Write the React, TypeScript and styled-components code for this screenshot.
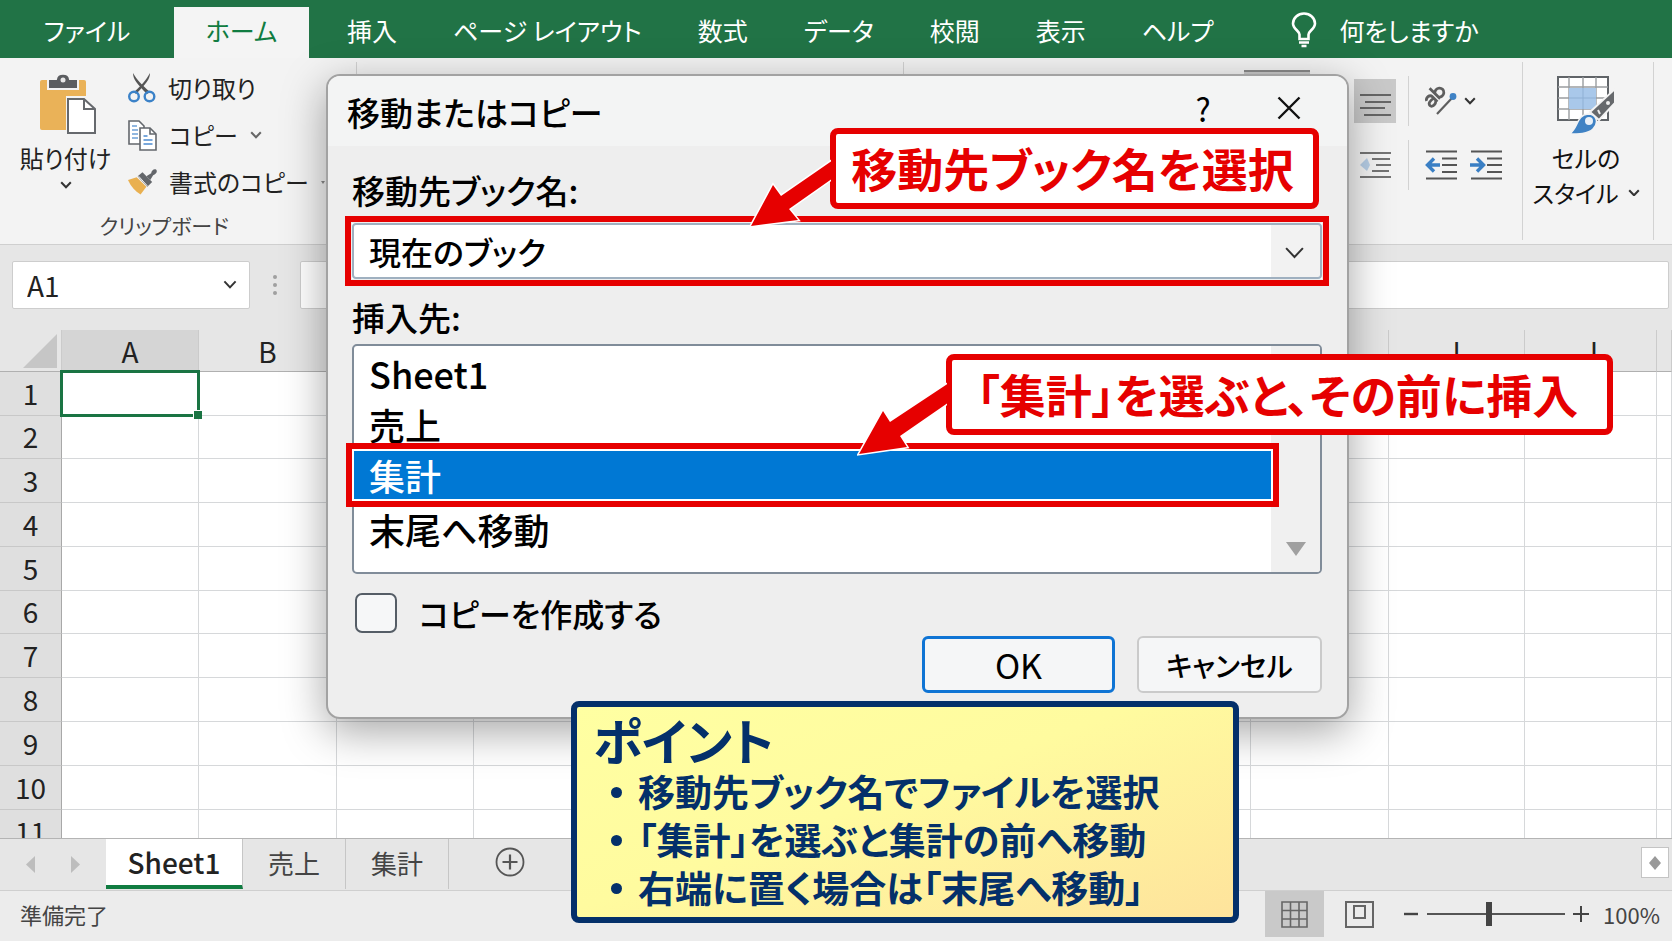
import React, { useState } from "react";
import styled, { createGlobalStyle } from "styled-components";

const GlobalStyle = createGlobalStyle`
  *, *::before, *::after { box-sizing: border-box; }
  body {
    margin: 0;
    background: #e6e6e6;
    font-family: "Noto Sans CJK JP", "Noto Sans", sans-serif;
    font-feature-settings: "palt";
    color: #222;
  }
  button, input, select { font: inherit; color: inherit; font-feature-settings: inherit; }
`;

const PlainButton = styled.button`
  display: inline-flex;
  align-items: center;
  justify-content: center;
  padding: 0;
  border: 0;
  background: none;
  white-space: nowrap;
  cursor: pointer;
`;

const Window = styled.div`
  position: relative;
  display: flex;
  flex-direction: column;
  height: 100vh;
  min-height: 720px;
  overflow: hidden;
`;

/* ---------- ribbon tabs ---------- */

const TabBar = styled.nav`
  display: flex;
  align-items: flex-end;
  height: 58px;
  flex: none;
  background: #217346;
`;

const RibbonTab = styled(PlainButton)<{ $active?: boolean; $first?: boolean }>`
  height: 51px;
  min-width: ${(p) => (p.$first ? "174px" : p.$active ? "135px" : "0")};
  margin-right: ${(p) => (p.$active ? "10px" : "0")};
  padding: 0 28px 6px;
  font-size: 25px;
  line-height: 32px;
  color: ${(p) => (p.$active ? "#107c41" : "#fff")};
  background: ${(p) => (p.$active ? "#f4f4f4" : "transparent")};
`;

const TellMe = styled(PlainButton)`
  height: 51px;
  gap: 22px;
  margin-left: 50px;
  padding-bottom: 6px;
  font-size: 25px;
  color: #fff;
`;

/* ---------- ribbon ---------- */

const Ribbon = styled.section`
  display: flex;
  flex: none;
  height: 187px;
  padding: 4px 0;
  background: #f3f3f3;
  border-bottom: 1px solid #cfcfcf;
`;

const Group = styled.div<{ $width?: number }>`
  display: flex;
  flex-direction: column;
  ${(p) => (p.$width ? `flex: 0 0 ${p.$width}px;` : "flex: 1 1 0;")}
  border-right: 1px solid #d2d2d2;
  &:last-child { border-right: 0; }
`;

const ClipboardTools = styled.div`
  display: flex;
  gap: 18px;
  padding: 8px 0 0 21px;
`;

const PasteButton = styled(PlainButton)`
  flex-direction: column;
  justify-content: flex-start;
  width: 89px;
  padding-top: 4px;
  gap: 5px;
  font-size: 24px;
  line-height: 36px;
`;

const ToolList = styled.div`
  display: flex;
  flex-direction: column;
  gap: 11px;
`;

const ToolButton = styled(PlainButton)`
  justify-content: flex-start;
  height: 36px;
  gap: 12px;
  font-size: 24px;
  line-height: 36px;
`;

const GroupLabel = styled.div`
  margin-top: auto;
  padding-right: 28px;
  font-size: 21px;
  line-height: 30px;
  text-align: center;
  color: #444;
`;

const AlignTools = styled.div`
  display: flex;
  flex-direction: column;
  align-items: flex-end;
  gap: 8px;
  padding: 8px 20px 0 0;
`;

const AlignRow = styled.div<{ $tall?: boolean }>`
  display: flex;
  align-items: center;
  height: ${(p) => (p.$tall ? "62px" : "50px")};
`;

const WrapButton = styled(PlainButton)`
  align-self: stretch;
  width: 66px;
  margin-right: 44px;
  background: #c9c9c9;
  border-top: 2px solid #8a8a8a;
`;

const AlignButton = styled(PlainButton)<{ $active?: boolean }>`
  width: 42px;
  height: 44px;
  margin-right: 12px;
  background: ${(p) => (p.$active ? "#c9c9c9" : "transparent")};
`;

const AlignPair = styled.div<{ $gap: number }>`
  display: flex;
  align-items: center;
  gap: ${(p) => p.$gap}px;
  width: 94px;
  height: 50px;
  padding-left: 16px;
  border-left: 1px solid #d2d2d2;
`;

const StyleButton = styled(PlainButton)`
  flex-direction: column;
  justify-content: flex-start;
  padding: 14px 4px 0 0;
  font-size: 24px;
  line-height: 35px;
  color: #111;
`;

const StyleLabel = styled.span`
  margin-top: 6px;
`;

const InlineRow = styled.span`
  display: inline-flex;
  align-items: center;
  gap: 9px;
`;

/* ---------- formula bar ---------- */

const FormulaBar = styled.div`
  display: flex;
  align-items: center;
  flex: none;
  height: 85px;
  padding: 0 3px 6px 12px;
  background: #e6e6e6;
`;

const NameBox = styled.div`
  display: flex;
  align-items: center;
  width: 238px;
  height: 48px;
  padding: 0 12px 0 14px;
  background: #fff;
  border: 1px solid #cdcdcd;
  border-radius: 2px;
`;

const NameInput = styled.input`
  flex: 1;
  min-width: 0;
  padding: 0;
  border: 0;
  outline: 0;
  background: none;
  font-size: 28px;
`;

const Grip = styled.div`
  display: flex;
  flex-direction: column;
  align-items: center;
  gap: 4px;
  width: 50px;
`;

const GripDot = styled.span`
  width: 4px;
  height: 4px;
  border-radius: 50%;
  background: #a0a0a0;
`;

const FormulaInput = styled.input`
  flex: 1;
  height: 48px;
  padding: 0 20px;
  border: 1px solid #cdcdcd;
  border-radius: 2px;
  outline: 0;
  background: #fff;
`;

/* ---------- grid ---------- */

const SheetArea = styled.div`
  flex: 1 1 0;
  overflow: hidden;
  background: #fff;
`;

const Grid = styled.table`
  width: 100%;
  table-layout: fixed;
  border-collapse: separate;
  border-spacing: 0;
  font-size: 28px;
  line-height: 40px;
  font-weight: 400;
`;

const ColHead = styled.th<{ $selected?: boolean }>`
  height: 42px;
  padding: 0;
  font-weight: 400;
  overflow: hidden;
  background: ${(p) => (p.$selected ? "#d5d5d5" : "#e6e6e6")};
  border-right: 1px solid #cbcbcb;
  border-bottom: 1px solid #b0b0b0;
`;

const Corner = styled.th`
  height: 42px;
  padding: 0 4px 0 0;
  text-align: right;
  line-height: 0;
  background: #e6e6e6;
  border-right: 1px solid #cbcbcb;
  border-bottom: 1px solid #b0b0b0;
`;

const RowHead = styled.th<{ $height: number }>`
  height: ${(p) => p.$height}px;
  padding: 0 0 2px;
  font-weight: 400;
  background: #dfdfdf;
  border-right: 1px solid #a8a8a8;
  border-bottom: 1px solid #c8c8c8;
`;

const Cell = styled.td`
  position: relative;
  padding: 0;
  border-right: 1px solid #d6d8da;
  border-bottom: 1px solid #d6d8da;
`;

const Selection = styled.div`
  position: absolute;
  z-index: 1;
  inset: -2px;
  border: 3px solid #1a7443;
  &::after {
    content: "";
    position: absolute;
    right: -5px;
    bottom: -5px;
    width: 9px;
    height: 9px;
    background: #1a7443;
    border: 1px solid #fff;
    border-width: 1px 0 0 1px;
  }
`;

/* ---------- sheet tabs and status bar ---------- */

const SheetBar = styled.div`
  display: flex;
  align-items: flex-start;
  flex: none;
  height: 53px;
  background: #e6e6e6;
  border-top: 1px solid #b4b4b4;
  border-bottom: 1px solid #cfcfcf;
`;

const SheetNav = styled.div`
  display: flex;
  align-items: center;
  gap: 36px;
  width: 106px;
  height: 50px;
  padding-left: 26px;
`;

const SheetTab = styled(PlainButton)<{ $active?: boolean }>`
  height: 50px;
  padding: ${(p) => (p.$active ? "0" : "0 25px 3px")};
  width: ${(p) => (p.$active ? "137px" : "auto")};
  font-size: ${(p) => (p.$active ? "28px" : "26px")};
  line-height: 40px;
  font-weight: ${(p) => (p.$active ? 500 : 400)};
  color: ${(p) => (p.$active ? "#222" : "#444")};
  background: ${(p) => (p.$active ? "#fff" : "transparent")};
  border-right: 1px solid #c6c6c6;
  border-bottom: ${(p) => (p.$active ? "4px solid #107c41" : "0")};
`;

const AddSheet = styled(PlainButton)`
  height: 46px;
  margin-left: 46px;
`;

const ScrollEnd = styled(PlainButton)`
  width: 28px;
  height: 31px;
  margin: 8px 3px 0 auto;
  background: #fff;
  border: 1px solid #c4c4c4;
`;

const StatusBar = styled.footer`
  display: flex;
  align-items: center;
  flex: none;
  height: 50px;
  padding: 0 12px 4px 20px;
  background: #ececec;
  font-size: 22px;
  line-height: 32px;
  color: #444;
`;

const StatusTools = styled.div`
  display: flex;
  align-items: center;
  margin-left: auto;
`;

const ViewButton = styled(PlainButton)<{ $active?: boolean }>`
  width: 59px;
  height: 46px;
  margin-right: 6px;
  background: ${(p) => (p.$active ? "#c9c9c9" : "transparent")};
`;

const Zoom = styled.div`
  display: flex;
  align-items: center;
  gap: 8px;
  margin: 0 14px 0 8px;
`;

const ZoomSlider = styled.input`
  appearance: none;
  width: 138px;
  height: 24px;
  margin: 0;
  background: linear-gradient(#555, #555) center / 100% 2px no-repeat;
  &::-webkit-slider-thumb {
    appearance: none;
    width: 6px;
    height: 24px;
    background: #444;
  }
`;

const ZoomValue = styled.output`
  font-size: 22px;
`;

/* ---------- dialog ---------- */

const Dialog = styled.section`
  position: absolute;
  top: 74px;
  left: 326px;
  right: 323px;
  padding-bottom: 24px;
  background: #eeeeee;
  border: 2px solid #a2a2a2;
  border-radius: 14px;
  box-shadow: 0 12px 44px rgba(0, 0, 0, 0.36);
  color: #000;
`;

const DialogHeader = styled.header`
  display: flex;
  align-items: center;
  height: 70px;
  padding: 1px 44px 0 19px;
  background: #f3f4f4;
  border-radius: 12px 12px 0 0;
`;

const DialogTitle = styled.h2`
  margin: 0 auto 0 0;
  font-size: 33px;
  line-height: 44px;
  font-weight: 500;
`;

const HeaderButton = styled(PlainButton)`
  width: 48px;
  height: 48px;
  margin-left: 38px;
  margin-bottom: 8px;
  font-size: 32px;
  &:last-child { margin-right: -10px; }
`;

const DialogBody = styled.div`
  display: flex;
  flex-direction: column;
  padding: 22px 25px 0 24px;
`;

const FieldLabel = styled.label<{ $gap: number }>`
  font-size: 33px;
  line-height: 44px;
  font-weight: 500;
  margin-bottom: ${(p) => p.$gap}px;
`;

const Field = styled.div`
  position: relative;
  margin-bottom: 16px;
  background: #fff;
  outline: 6px solid #e60000;
  outline-offset: 1px;
`;

const ComboBox = styled.select`
  appearance: none;
  display: block;
  width: 100%;
  height: 56px;
  padding: 0 64px 0 15px;
  border: 2px solid #9fb0c0;
  border-radius: 4px;
  background: linear-gradient(to left, #f2f2f2 49px, #fff 49px);
  font-size: 32px;
  font-weight: 500;
  color: #000;
`;

const ComboArrow = styled.span`
  position: absolute;
  right: 17px;
  top: 23px;
  line-height: 0;
  pointer-events: none;
`;

const ListFrame = styled.div`
  position: relative;
  display: flex;
  height: 230px;
  border: 2px solid #808c99;
  border-radius: 5px;
  background: #fff;
`;

const ListBox = styled.ul`
  flex: 1;
  margin: 0;
  padding: 3px 0 0;
  list-style: none;
`;

const ListItem = styled.li<{ $selected?: boolean }>`
  position: relative;
  height: 48px;
  margin-bottom: ${(p) => (p.$selected ? 6 : 3)}px;
  padding-left: 15px;
  font-size: 36px;
  line-height: 48px;
  font-weight: 500;
  color: ${(p) => (p.$selected ? "#fff" : "#000")};
  background: ${(p) => (p.$selected ? "#0078d4" : "transparent")};
  outline: ${(p) => (p.$selected ? "6px solid #e60000" : "none")};
  outline-offset: 2px;
  box-shadow: ${(p) => (p.$selected ? "0 0 0 2px #fff" : "none")};
  z-index: ${(p) => (p.$selected ? 1 : 0)};
`;

const ListScroll = styled.div`
  display: flex;
  align-items: flex-end;
  justify-content: center;
  width: 49px;
  padding-bottom: 16px;
  background: #f0f0f0;
  border-radius: 0 3px 3px 0;
  line-height: 0;
`;

const CopyOption = styled.label`
  display: flex;
  align-items: center;
  gap: 22px;
  margin: 16px 0 0 3px;
  font-size: 32px;
  line-height: 46px;
  font-weight: 500;
`;

const CheckBox = styled.input`
  appearance: none;
  width: 42px;
  height: 40px;
  margin: 0;
  border: 2px solid #555d66;
  border-radius: 7px;
  background: #f6f7f8;
  &:checked { background: #0078d4; }
`;

const DialogActions = styled.div`
  display: flex;
  justify-content: flex-end;
  gap: 22px;
`;

const DialogButton = styled(PlainButton)<{ $primary?: boolean }>`
  width: ${(p) => (p.$primary ? "193px" : "185px")};
  height: 57px;
  border: ${(p) => (p.$primary ? "3px solid #0f74d4" : "2px solid #cacaca")};
  border-radius: 6px;
  background: #f5f6f7;
  font-size: ${(p) => (p.$primary ? "34px" : "28px")};
  line-height: 44px;
  font-weight: ${(p) => (p.$primary ? 400 : 500)};
`;

/* ---------- annotations ---------- */

const Callout = styled.div<{ $top: number; $right: number; $width: number }>`
  position: absolute;
  z-index: 2;
  top: ${(p) => p.$top}px;
  right: ${(p) => p.$right}px;
  display: flex;
  align-items: center;
  justify-content: center;
  width: ${(p) => p.$width}px;
  height: 81px;
  padding: 0 4px 4px 0;
  border: 6px solid #e60000;
  border-radius: 8px;
  background: #fff;
  font-size: 46px;
  line-height: 60px;
  font-weight: 700;
  white-space: nowrap;
  color: #e60000;
`;

const CalloutArrow = styled.svg`
  position: absolute;
  right: calc(100% + 5px);
  top: 19px;
`;

const PointNote = styled.aside`
  position: absolute;
  top: 701px;
  left: 571px;
  right: 433px;
  padding: 4px 16px 6px;
  border: 6px solid #04306a;
  border-radius: 8px;
  background: linear-gradient(160deg, #ffffa2 0%, #fffb9f 45%, #fee39c 100%);
  color: #04306a;
  font-weight: 700;
`;

const PointTitle = styled.h3`
  margin: 0;
  font-size: 50px;
  line-height: 56px;
`;

const PointList = styled.ul`
  margin: 0;
  padding: 0 0 0 45px;
  list-style: none;
  font-size: 37px;
  line-height: 48px;
  white-space: nowrap;
`;

const PointItem = styled.li`
  position: relative;
  &::before {
    content: "";
    position: absolute;
    left: -27px;
    top: 20px;
    width: 11px;
    height: 11px;
    border-radius: 50%;
    background: #04306a;
  }
`;

/* ---------- drawings ---------- */

const Chevron = ({ w = 12, color = "#333", stroke = 2 }: { w?: number; color?: string; stroke?: number }) => (
  <svg width={w} height={w * 0.65} viewBox="0 0 20 13" fill="none" aria-hidden="true">
    <path d="M2 2l8 8.500 8-8.500" stroke={color} strokeWidth={(stroke * 20) / w} />
  </svg>
);

const BulbIcon = () => (
  <svg width="26" height="36" viewBox="0 0 26 36" fill="none" stroke="#fff" strokeWidth="2.600" aria-hidden="true">
    <path d="M8.500 27v-4.500C8.500 19 2 17 2 11.500a11 10 0 0 1 22 0C24 17 17.500 19 17.500 22.500V27z" />
    <path d="M8 30.500h10M10.500 34h5" />
  </svg>
);

const PasteIcon = () => (
  <svg width="62" height="61" viewBox="-5 0 62 61" aria-hidden="true">
    <rect x="0" y="6" width="46" height="50" rx="2" fill="#eab258" />
    <path d="M8 5h8c1-7 13-7 14 0h8v10H8z" fill="#5b5d60" stroke="#f3f3f3" strokeWidth="2" />
    <circle cx="23" cy="6" r="2.500" fill="#e8e8e8" />
    <path d="M26 22h20l11 11v28H26z" fill="#f3f3f3" />
    <path d="M28 25h16l11 10v24H28z" fill="#fff" stroke="#66696d" strokeWidth="2" />
    <path d="M44 25v10h11" fill="none" stroke="#66696d" strokeWidth="2" />
  </svg>
);

const CutIcon = () => (
  <svg width="28" height="30" viewBox="0 0 28 30" fill="none" aria-hidden="true">
    <path d="M5 0C5 6 9 11 19 21l3-2C14 12 9 7 5 0z" fill="#555" />
    <path d="M22 0c0 6-4 11-14 21l-2-2C14 12 18 7 22 0z" fill="#555" />
    <circle cx="6" cy="23.500" r="4.800" stroke="#3b82c8" strokeWidth="2.400" />
    <circle cx="21.500" cy="23.500" r="4.800" stroke="#3b82c8" strokeWidth="2.400" />
  </svg>
);

const CopyIcon = () => (
  <svg width="29" height="31" viewBox="0 0 29 31" fill="#fff" stroke="#63676c" strokeWidth="1.600" aria-hidden="true">
    <path d="M1 1h10l5 5v18H1z" />
    <path d="M4 6h5M4 10h6M4 14h6M4 18h6" stroke="#6ea0d6" />
    <path d="M12 8h10l6 6v16H12z" />
    <path d="M22 8v6h6" fill="none" />
    <path d="M15.500 16h4M15.500 20h9M15.500 24h9" stroke="#4c8bd0" />
  </svg>
);

const BrushIcon = () => (
  <svg width="29" height="28" viewBox="0 0 30 28" aria-hidden="true">
    <path d="M0 12l9-3 10 10-6 8C8 24 3 19 0 12z" fill="#e9b050" />
    <path d="M10 8l5-4 10 10-5 5z" fill="#63666a" />
    <path d="M19 8l5-3c0-3 3-5 5-4 2 2 0 5-3 6l-3 5z" fill="#63666a" />
    <path d="M11 8l9 10" stroke="#f3f3f3" strokeWidth="1" />
  </svg>
);

const AlignIcon = () => (
  <svg width="32" height="34" viewBox="0 0 32 34" stroke="#666" strokeWidth="2" aria-hidden="true">
    <path d="M1 11h31M6 18h26M1 24h25M5 31h27" />
  </svg>
);

const IndentIcon = ({ dir, faint }: { dir: "left" | "right"; faint?: boolean }) => (
  <svg width="33" height="30" viewBox="0 0 33 30" fill="none" opacity={faint ? 0.8 : 1} aria-hidden="true">
    {faint ? (
      <>
        <path d="M1 3h31M13 9h18M17 15h15M13 21h17M1 27h31" stroke="#555" strokeWidth="1.800" />
        <path d="M1 15l7-7 3 7-3 6z" fill="#a9c6e4" />
      </>
    ) : (
      <>
        <path d="M1 1.500h31M17 8.500h15M17 15h15M17 22h15M1 28.500h31" stroke="#555" strokeWidth="2" />
        <path
          d={dir === "left" ? "M15 15H3M9 8.500L2.500 15 9 21.500" : "M0 15h12M7 8.500l6.500 6.500L7 21.500"}
          stroke="#3a7fc4"
          strokeWidth="3.400"
        />
      </>
    )}
  </svg>
);

const OrientIcon = () => (
  <svg width="32" height="30" viewBox="0 0 32 30" fill="none" stroke="#5e5e5e" strokeWidth="2.800" aria-hidden="true">
    <g transform="translate(6 22) rotate(-45)">
      <path d="M9 0v-7c0-4-6-4-7-1M9-5C4-6 1-5 1-2.500 1 1 7 1 9-2.500" />
      <path d="M13-15V0M13-2.500a4.600 4.400 0 1 0 0-5" />
    </g>
    <path d="M12 28L27 12" strokeWidth="2.200" />
    <circle cx="28" cy="10.500" r="3.400" fill="#3f82c5" stroke="none" />
  </svg>
);

const CellStyleIcon = () => (
  <svg width="58" height="58" viewBox="0 0 58 58" aria-hidden="true">
    <rect x="1" y="1" width="50" height="43" fill="#fff" stroke="#606468" strokeWidth="2" />
    <path d="M12 1v43M26 1v43M39 1v43M1 11h50M1 22h50M1 33h50" stroke="#9a9da0" strokeWidth="1.400" />
    <rect x="12" y="12" width="27" height="21" fill="#a9c8ea" />
    <path d="M26 12v21M12 22h27" stroke="#8fb0d4" />
    <path d="M58 13v14L42 44l-9-8z" fill="#66696c" stroke="#f3f3f3" strokeWidth="2" />
    <path d="M12 58c9-4 7-19 19-20 9 0 11 9 5 15-5 5-15 5-24 5z" fill="#3f82c4" stroke="#f3f3f3" strokeWidth="1.500" />
    <circle cx="32" cy="45" r="4" fill="#e8f0f8" />
    <circle cx="51" cy="27" r="2" fill="#eee" />
    <path d="M41 34l2 4" stroke="#eee" strokeWidth="2" />
  </svg>
);

const Triangle = ({ d, w, h, fill }: { d: string; w: number; h: number; fill: string }) => (
  <svg width={w} height={h} viewBox={`0 0 ${w} ${h}`} aria-hidden="true">
    <path d={d} fill={fill} />
  </svg>
);

/* ---------- data ---------- */

const ribbonTabs = ["ファイル", "ホーム", "挿入", "ページ レイアウト", "数式", "データ", "校閲", "表示", "ヘルプ"];
const columns = [
  { name: "A", width: 137 },
  { name: "B", width: 138 },
  { name: "", width: 137 },
  { name: "", width: 194 },
  { name: "", width: 194 },
  { name: "", width: 194 },
  { name: "", width: 195 },
  { name: "", width: 138 },
  { name: "I", width: 136 },
  { name: "J", width: 132 },
];
const rowHeights = [44, 43, 44, 44, 44, 43, 44, 44, 44, 44, 44];
const sheets = ["Sheet1", "売上", "集計"];
const targets = ["Sheet1", "売上", "集計", "末尾へ移動"];
const points = ["移動先ブック名でファイルを選択", "「集計」を選ぶと集計の前へ移動", "右端に置く場合は「末尾へ移動」"];

export default function App() {
  const [target, setTarget] = useState("集計");
  return (
    <Window>
      <GlobalStyle />
      <TabBar aria-label="リボン">
        {ribbonTabs.map((t, i) => (
          <RibbonTab key={t} $first={i === 0} $active={i === 1}>{t}</RibbonTab>
        ))}
        <TellMe><BulbIcon />何をしますか</TellMe>
      </TabBar>

      <Ribbon>
        <Group $width={357}>
          <ClipboardTools>
            <PasteButton><PasteIcon />貼り付け<Chevron /></PasteButton>
            <ToolList>
              <ToolButton><CutIcon />切り取り</ToolButton>
              <ToolButton><CopyIcon />コピー<Chevron color="#666" /></ToolButton>
              <ToolButton>
                <BrushIcon />書式のコピー
                <Triangle w={4} h={3} d="M0 0h4L2 3z" fill="#888" />
              </ToolButton>
            </ToolList>
          </ClipboardTools>
          <GroupLabel>クリップボード</GroupLabel>
        </Group>
        <Group $width={547} />
        <Group>
          <AlignTools>
            <AlignRow $tall>
              <WrapButton aria-label="折り返して全体を表示する" />
              <AlignButton $active aria-label="中央揃え"><AlignIcon /></AlignButton>
              <AlignPair $gap={7}>
                <PlainButton aria-label="方向"><OrientIcon /></PlainButton>
                <Chevron />
              </AlignPair>
            </AlignRow>
            <AlignRow>
              <AlignButton aria-label="字下げ"><IndentIcon dir="left" faint /></AlignButton>
              <AlignPair $gap={12}>
                <PlainButton aria-label="インデントを減らす"><IndentIcon dir="left" /></PlainButton>
                <PlainButton aria-label="インデントを増やす"><IndentIcon dir="right" /></PlainButton>
              </AlignPair>
            </AlignRow>
          </AlignTools>
        </Group>
        <Group $width={131}>
          <StyleButton>
            <CellStyleIcon />
            <StyleLabel>セルの</StyleLabel>
            <InlineRow>スタイル<Chevron /></InlineRow>
          </StyleButton>
        </Group>
        <Group $width={18} />
      </Ribbon>

      <FormulaBar>
        <NameBox>
          <NameInput aria-label="名前ボックス" defaultValue="A1" />
          <Chevron w={14} />
        </NameBox>
        <Grip><GripDot /><GripDot /><GripDot /></Grip>
        <FormulaInput aria-label="数式バー" />
      </FormulaBar>

      <SheetArea>
        <Grid>
          <colgroup>
            <col width={62} />
            {columns.map((c, i) => <col key={i} width={c.width} />)}
            <col />
          </colgroup>
          <thead>
            <tr>
              <Corner><Triangle w={34} h={34} d="M34 0v34H0z" fill="#c6c6c6" /></Corner>
              {columns.map((c, i) => <ColHead key={i} $selected={i === 0}>{c.name}</ColHead>)}
              <ColHead />
            </tr>
          </thead>
          <tbody>
            {rowHeights.map((h, r) => (
              <tr key={r}>
                <RowHead scope="row" $height={h}>{r + 1}</RowHead>
                {columns.map((c, i) => <Cell key={i}>{r === 0 && i === 0 && <Selection />}</Cell>)}
                <Cell />
              </tr>
            ))}
          </tbody>
        </Grid>
      </SheetArea>

      <SheetBar>
        <SheetNav>
          <Triangle w={9} h={17} d="M9 0v17L0 8.500z" fill="#bdbdbd" />
          <Triangle w={9} h={17} d="M0 0v17L9 8.500z" fill="#bdbdbd" />
        </SheetNav>
        {sheets.map((s, i) => <SheetTab key={s} $active={i === 0}>{s}</SheetTab>)}
        <AddSheet aria-label="新しいシート">
          <svg width="30" height="30" viewBox="0 0 30 30" fill="none" stroke="#555" strokeWidth="1.800" aria-hidden="true">
            <circle cx="15" cy="15" r="13.500" />
            <path d="M15 7.500v15M7.500 15h15" strokeWidth="2.200" />
          </svg>
        </AddSheet>
        <ScrollEnd aria-label="右へスクロール">
          <Triangle w={12} h={14} d="M6 0l6 7-6 7-6-7z" fill="#999" />
        </ScrollEnd>
      </SheetBar>

      <StatusBar>
        <span>準備完了</span>
        <StatusTools>
          <ViewButton $active aria-label="標準">
            <svg width="27" height="27" viewBox="0 0 27 27" fill="none" stroke="#666" strokeWidth="1.600" aria-hidden="true">
              <path d="M1 1h25v25H1zM9.500 1v25M18 1v25M1 9.500h25M1 18h25" />
            </svg>
          </ViewButton>
          <ViewButton aria-label="ページ レイアウト">
            <svg width="29" height="27" viewBox="0 0 29 27" fill="none" stroke="#666" strokeWidth="2" aria-hidden="true">
              <path d="M1 1h27v25H1zM9 5h11v12H9z" />
            </svg>
          </ViewButton>
          <Zoom>
            <PlainButton aria-label="縮小">
              <svg width="16" height="16" viewBox="0 0 16 16" stroke="#444" strokeWidth="2.400" aria-hidden="true"><path d="M1 8h14" /></svg>
            </PlainButton>
            <ZoomSlider type="range" aria-label="ズーム" min={0} max={100} defaultValue={45} />
            <PlainButton aria-label="拡大">
              <svg width="16" height="16" viewBox="0 0 16 16" stroke="#444" strokeWidth="2" aria-hidden="true"><path d="M0 8h16M8 0v16" /></svg>
            </PlainButton>
          </Zoom>
          <ZoomValue>100%</ZoomValue>
        </StatusTools>
      </StatusBar>

      <Dialog role="dialog" aria-labelledby="dialog-title">
        <DialogHeader>
          <DialogTitle id="dialog-title">移動またはコピー</DialogTitle>
          <HeaderButton aria-label="ヘルプ">?</HeaderButton>
          <HeaderButton aria-label="閉じる">
            <svg width="24" height="24" viewBox="0 0 24 24" stroke="#111" strokeWidth="2.400" aria-hidden="true">
              <path d="M1.500 1.500l21 21M22.500 1.500l-21 21" />
            </svg>
          </HeaderButton>
        </DialogHeader>
        <DialogBody>
          <FieldLabel htmlFor="book" $gap={11}>移動先ブック名:</FieldLabel>
          <Field>
            <ComboBox id="book"><option>現在のブック</option></ComboBox>
            <ComboArrow><Chevron w={21} stroke={2} /></ComboArrow>
            <Callout $top={-95} $right={3} $width={489}>
              <CalloutArrow width="90" height="90" viewBox="-90 26 90 90" aria-hidden="true">
                <path d="M2 33L-50 69-58 58-80 99-33 93-42 82 2 51z" fill="#e60000" stroke="#fff" strokeWidth="3" paintOrder="stroke" />
              </CalloutArrow>
              移動先ブック名を選択
            </Callout>
          </Field>
          <FieldLabel as="div" id="before-label" $gap={5}>挿入先:</FieldLabel>
          <ListFrame>
            <ListBox role="listbox" aria-labelledby="before-label">
              {targets.map((t) => (
                <ListItem key={t} role="option" aria-selected={t === target} $selected={t === target} onClick={() => setTarget(t)}>
                  {t}
                </ListItem>
              ))}
            </ListBox>
            <ListScroll><Triangle w={20} h={14} d="M0 0h20L10 14z" fill="#a0a0a0" /></ListScroll>
            <Callout $top={8} $right={-293} $width={667}>
              <CalloutArrow width="90" height="90" viewBox="-90 26 90 90" aria-hidden="true">
                <path d="M2 30L-57 69-64 58-88 101-40 94-47 83 2 49z" fill="#e60000" stroke="#fff" strokeWidth="3" paintOrder="stroke" />
              </CalloutArrow>
              「集計」を選ぶと、その前に挿入
            </Callout>
          </ListFrame>
          <CopyOption><CheckBox type="checkbox" />コピーを作成する</CopyOption>
          <DialogActions>
            <DialogButton $primary>OK</DialogButton>
            <DialogButton>キャンセル</DialogButton>
          </DialogActions>
        </DialogBody>
      </Dialog>

      <PointNote>
        <PointTitle>ポイント</PointTitle>
        <PointList>
          {points.map((p) => <PointItem key={p}>{p}</PointItem>)}
        </PointList>
      </PointNote>
    </Window>
  );
}
